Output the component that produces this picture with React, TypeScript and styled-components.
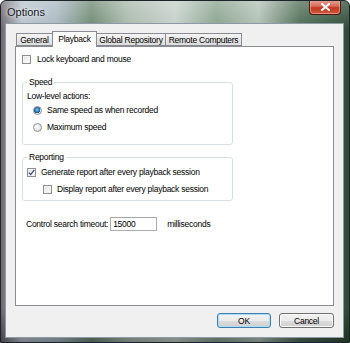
import React from "react";
import styled, { createGlobalStyle } from "styled-components";

const GlobalStyle = createGlobalStyle`
  html, body { margin: 0; padding: 0; background: #ffffff; }
  body { font-family: "Liberation Sans", Arial, sans-serif; }
  * { box-sizing: border-box; }
`;

const Window = styled.div`
  width: 350px;
  height: 343px;
  display: flex;
  flex-direction: column;
  padding: 0 5px 4px 4px;
  border: 1px solid #1d2428;
  border-radius: 6px 6px 0 0;
  background:
    linear-gradient(180deg, rgba(255,255,255,0.25) 0%, rgba(255,255,255,0) 8%, rgba(0,0,0,0) 90%, rgba(0,0,0,0.35) 100%),
    linear-gradient(90deg, #6e6670 0%, #b9c4cd 6%, #aab8c2 16%, #6f8a73 26%, #a8b8ab 36%, #c6d0cb 50%, #8aa38e 62%, #b2c0b6 74%, #4f6d55 86%, #2f4b37 100%);
  overflow: hidden;
`;

const TitleBar = styled.div`
  height: 22px;
  display: flex;
  justify-content: space-between;
  align-items: flex-start;
  padding: 0 3px 0 2px;
`;

const Title = styled.span`
  margin-top: 5px;
  font-family: "Liberation Sans", Arial, sans-serif;
  font-size: 11px;
  color: #101418;
  text-shadow: 0 0 6px rgba(255, 255, 255, 0.9), 0 0 2px rgba(255,255,255,0.8);
`;

const CloseButton = styled.div`
  width: 32px;
  height: 15px;
  margin-top: -1px;
  display: flex;
  align-items: center;
  justify-content: center;
  border: 1px solid #4b1a12;
  border-top: none;
  border-radius: 0 0 4px 4px;
  background: linear-gradient(180deg, #e9a396 0%, #d56a56 45%, #c0391f 55%, #d0583c 100%);
  box-shadow: inset 0 0 0 1px rgba(255, 200, 190, 0.5);
`;

const Client = styled.div`
  flex: 1;
  display: flex;
  flex-direction: column;
  background: #f0f0f0;
  border: 1px solid #8d9aa6;
  padding: 7px 10px 0 9px;
  font-size: 8.5px;
  letter-spacing: -0.25px;
  color: #000;
`;

const TabStrip = styled.div`
  height: 15px;
  display: flex;
  align-items: flex-end;
  padding-left: 1px;
  position: relative;
  z-index: 1;
`;

const Tab = styled.div<{ $w: number; $active?: boolean }>`
  width: ${(p) => p.$w}px;
  height: ${(p) => (p.$active ? 16 : 13)}px;
  margin-bottom: ${(p) => (p.$active ? -1 : 0)}px;
  display: flex;
  align-items: ${(p) => (p.$active ? "flex-start" : "center")};
  justify-content: center;
  padding-top: ${(p) => (p.$active ? 2 : 0)}px;
  border: 1px solid #898c95;
  border-bottom: ${(p) => (p.$active ? "none" : "1px solid #898c95")};
  background: ${(p) =>
    p.$active ? "#ffffff" : "linear-gradient(180deg, #f4f4f4 0%, #e9e9e9 50%, #dcdcdc 100%)"};
  white-space: nowrap;
  & + & { margin-left: -1px; }
`;

const Panel = styled.div`
  height: 260px;
  width: 319px;
  background: #ffffff;
  border: 1px solid #898c95;
  display: flex;
  flex-direction: column;
  padding: 6px 0 0 6px;
`;

const Row = styled.div<{ $indent?: number; $gap?: number; $top?: number }>`
  height: 12px;
  display: flex;
  align-items: center;
  gap: ${(p) => p.$gap ?? 6}px;
  margin-left: ${(p) => p.$indent ?? 0}px;
  margin-top: ${(p) => p.$top ?? 0}px;
  white-space: nowrap;
`;

const Box = styled.span`
  width: 9px;
  height: 9px;
  flex: none;
  border: 1px solid #8e8f8f;
  background: linear-gradient(135deg, #dcdcdc 0%, #f4f4f4 60%, #ffffff 100%);
  box-shadow: inset 0 0 0 1px #f4f4f4;
  display: flex;
  align-items: center;
  justify-content: center;
`;

const Radio = styled.span<{ $on?: boolean }>`
  width: 9px;
  height: 9px;
  flex: none;
  border-radius: 50%;
  border: 1px solid #8e8f8f;
  background: ${(p) =>
    p.$on
      ? "radial-gradient(circle at 45% 40%, #7fd0f5 0%, #2b82c4 35%, #1a4f7d 55%, #eef0f2 60%, #d8d8d8 100%)"
      : "radial-gradient(circle at 40% 40%, #ffffff 0%, #e6e6e6 60%, #cfcfcf 100%)"};
`;

const Group = styled.fieldset<{ $top: number; $pb: number }>`
  width: 211px;
  margin: ${(p) => p.$top}px 0 0 0;
  padding: 0 4px ${(p) => p.$pb}px 4px;
  border: 1px solid #d5dfe5;
  border-radius: 3px;
  display: flex;
  flex-direction: column;
  min-width: 0;
`;

const Legend = styled.legend`
  height: 12px;
  line-height: 12px;
  padding: 0 2px;
  margin-left: 0;
`;

const Input = styled.div`
  width: 47px;
  height: 14px;
  border: 1px solid #abadb3;
  border-top-color: #a3a6ab;
  background: #fff;
  display: flex;
  align-items: center;
  padding-left: 2px;
`;

const Unit = styled.span`
  margin-left: 8px;
`;

const ButtonRow = styled.div`
  display: flex;
  justify-content: flex-end;
  gap: 8px;
  margin-top: 7px;
  margin-right: -1px;
`;

const Button = styled.div<{ $default?: boolean }>`
  width: ${(p) => (p.$default ? 54 : 55)}px;
  height: 15px;
  display: flex;
  align-items: center;
  justify-content: center;
  border: 1px solid ${(p) => (p.$default ? "#3c7fb1" : "#707070")};
  border-radius: 3px;
  background: linear-gradient(180deg, #f2f2f2 0%, #ebebeb 50%, #dddddd 51%, #cfcfcf 100%);
  box-shadow: inset 0 0 0 1px ${(p) => (p.$default ? "#a8dcf5" : "#fbfbfb")};
`;

const Check = () => (
  <svg width="7" height="7" viewBox="0 0 7 7">
    <path d="M0.8 3.6 L2.7 5.6 L6.3 0.8" fill="none" stroke="#3d4f7a" strokeWidth="1.3" />
  </svg>
);

export default function App() {
  return (
    <>
      <GlobalStyle />
      <Window>
        <TitleBar>
          <Title>Options</Title>
          <CloseButton>
            <svg width="9" height="8" viewBox="0 0 9 8">
              <path d="M1 1 L8 7 M8 1 L1 7" stroke="#ffffff" strokeWidth="2" strokeLinecap="square" />
            </svg>
          </CloseButton>
        </TitleBar>
        <Client>
          <TabStrip>
            <Tab $w={37}>General</Tab>
            <Tab $w={45} $active>Playback</Tab>
            <Tab $w={70}>Global Repository</Tab>
            <Tab $w={77}>Remote Computers</Tab>
          </TabStrip>
          <Panel>
            <Row>
              <Box />
              <span>Lock keyboard and mouse</span>
            </Row>
            <Group $top={11} $pb={11}>
              <Legend>Speed</Legend>
              <Row $top={2}>Low-level actions:</Row>
              <Row $top={2} $indent={6} $gap={5}>
                <Radio $on />
                <span>Same speed as when recorded</span>
              </Row>
              <Row $top={5} $indent={6} $gap={5}>
                <Radio />
                <span>Maximum speed</span>
              </Row>
            </Group>
            <Group $top={6} $pb={5}>
              <Legend>Reporting</Legend>
              <Row $top={3} $gap={5}>
                <Box>
                  <Check />
                </Box>
                <span>Generate report after every playback session</span>
              </Row>
              <Row $top={5} $indent={16} $gap={5}>
                <Box />
                <span>Display report after every playback session</span>
              </Row>
            </Group>
            <Row $top={17} $indent={4} $gap={2}>
              <span>Control search timeout:</span>
              <Input>15000</Input>
              <Unit>milliseconds</Unit>
            </Row>
          </Panel>
          <ButtonRow>
            <Button $default>OK</Button>
            <Button>Cancel</Button>
          </ButtonRow>
        </Client>
      </Window>
    </>
  );
}
